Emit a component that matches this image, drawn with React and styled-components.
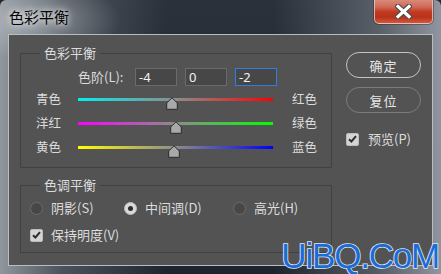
import React from "react";
import styled, { createGlobalStyle } from "styled-components";

const FONT = `"Noto Sans CJK SC", "Noto Sans", sans-serif`;

const Global = createGlobalStyle`
  html, body { margin: 0; padding: 0; background: #222831; }
  body { width: 441px; height: 274px; overflow: hidden; }
`;

const Window = styled.div`
  position: relative;
  width: 441px;
  height: 274px;
  box-sizing: border-box;
  display: flex;
  flex-direction: column;
  overflow: hidden;
  font-family: ${FONT};
  border-radius: 6px 6px 0 0;
  background:
    radial-gradient(ellipse 90px 40px at 30px 20px, rgba(200, 205, 210, 0.55), rgba(200, 205, 210, 0) 100%),
    linear-gradient(90deg, rgba(150, 156, 163, 0.95) 0%, rgba(95, 102, 111, 0.7) 14%, rgba(35, 42, 51, 0) 38%, rgba(35, 42, 51, 0) 62%, rgba(110, 116, 124, 0.7) 86%, rgba(150, 155, 165, 0.95) 100%),
    linear-gradient(180deg, #2a313b 0%, #222a33 40%, #1d242d 100%);
`;

const TitleBar = styled.div`
  height: 34px;
  flex: none;
  display: flex;
  align-items: flex-start;
  padding-left: 9px;
`;

const Title = styled.div`
  margin-top: 8px;
  font-size: 15px;
  line-height: 18px;
  color: #050505;
  text-shadow: 0 0 6px rgba(255, 255, 255, 0.85), 0 0 10px rgba(255, 255, 255, 0.5);
`;

const CloseButton = styled.div`
  margin-left: auto;
  margin-right: 8px;
  width: 59px;
  height: 24px;
  box-sizing: border-box;
  border: 1px solid rgba(235, 210, 205, 0.75);
  border-top: none;
  border-radius: 0 0 5px 5px;
  background: linear-gradient(180deg, #d98a7c 0%, #cf6a56 30%, #c2391f 52%, #b8331c 75%, #d2583c 100%);
  display: flex;
  align-items: center;
  justify-content: center;
  box-shadow: 0 0 0 1px rgba(40, 20, 20, 0.35);
`;

const Content = styled.div`
  flex: 1;
  margin: 0 8px 8px;
  box-sizing: border-box;
  background: #535353;
  border: 1px solid #b9bdc3;
  display: flex;
  align-items: flex-start;
  color: #d8d8d8;
`;

const LeftColumn = styled.div`
  width: 312px;
  padding: 11px 0 0 11px;
  display: flex;
  flex-direction: column;
`;

const Group = styled.fieldset`
  margin: ${(p) => (p.$first ? "0" : "10px 0 0")};
  padding: 0 0 ${(p) => p.$bottom}px;
  border: 1px solid #414141;
  min-width: 0;
  box-sizing: border-box;
  width: 312px;
`;

const Legend = styled.legend`
  margin-left: 19px;
  padding: 0 4px;
  font-size: 13px;
  line-height: 14px;
  height: 14px;
  color: #dcdcdc;
`;

const LevelRow = styled.div`
  margin-top: 8px;
  padding-left: 57px;
  display: flex;
  align-items: center;
  height: 18px;
`;

const LevelLabel = styled.span`
  width: 57px;
  font-size: 13px;
  line-height: 18px;
  color: #dcdcdc;
`;

const LevelInput = styled.div`
  width: 42px;
  height: 18px;
  box-sizing: border-box;
  margin-right: 8px;
  padding-left: 3px;
  background: #474747;
  border: 1px solid ${(p) => (p.$focused ? "#2f7fe0" : "#6a6a6a")};
  font-family: "Noto Sans", sans-serif;
  font-size: 13px;
  line-height: 16px;
  color: #f2f2f2;
`;

const SliderRow = styled.div`
  display: grid;
  grid-template-columns: 42px 195px 1fr;
  align-items: center;
  height: 24px;
  padding-left: 15px;
  margin-top: ${(p) => (p.$first ? "1px" : "0")};
`;

const SideLabel = styled.span`
  font-size: 12.5px;
  line-height: 16px;
  color: #dcdcdc;
  padding-left: ${(p) => (p.$right ? "19px" : "0")};
`;

const Track = styled.div`
  position: relative;
  height: 3px;
  background: linear-gradient(90deg, ${(p) => p.$from} 0%, #8c8c8c 50%, ${(p) => p.$to} 100%);
`;

const ThumbIcon = styled.svg`
  position: absolute;
  top: -1px;
  width: 12px;
  height: 13px;
  margin-left: -6px;
`;

const RadioRow = styled.div`
  margin-top: 8px;
  padding-left: 9px;
  display: grid;
  grid-template-columns: 94px 109px auto;
  height: 16px;
  align-items: center;
`;

const OptionItem = styled.label`
  display: flex;
  align-items: center;
  gap: 8px;
  font-size: 13px;
  line-height: 16px;
  color: #dcdcdc;
`;

const RadioDot = styled.span`
  width: 13px;
  height: 13px;
  box-sizing: border-box;
  border-radius: 50%;
  border: 1px solid ${(p) => (p.$checked ? "#bdbdbd" : "#6c6c6c")};
  background: ${(p) => (p.$checked ? "#d9d9d9" : "#474747")};
  display: flex;
  align-items: center;
  justify-content: center;
  &::after {
    content: "";
    display: ${(p) => (p.$checked ? "block" : "none")};
    width: 5px;
    height: 5px;
    border-radius: 50%;
    background: #2c2c2c;
  }
`;

const CheckRow = styled.div`
  margin-top: ${(p) => p.$top}px;
  padding-left: ${(p) => p.$left}px;
  display: flex;
  align-items: center;
  height: 16px;
`;

const CheckLabel = styled.label`
  display: flex;
  align-items: center;
  gap: ${(p) => p.$gap}px;
  font-size: 13px;
  line-height: 16px;
  color: #dcdcdc;
`;

const CheckBox = styled.span`
  width: 13px;
  height: 13px;
  box-sizing: border-box;
  border-radius: 2px;
  background: #d4d4d4;
  border: 1px solid #bcbcbc;
  display: flex;
  align-items: center;
  justify-content: center;
`;

const RightColumn = styled.div`
  margin-left: 14px;
  padding-top: 17px;
  display: flex;
  flex-direction: column;
`;

const PillButton = styled.div`
  width: 75px;
  height: 26px;
  box-sizing: border-box;
  margin-bottom: 9px;
  border-radius: 13px;
  border: ${(p) => (p.$primary ? "1.5px solid #c4c4c4" : "1px solid #7c7c7c")};
  display: flex;
  align-items: center;
  justify-content: center;
  font-size: 13px;
  letter-spacing: 1px;
  color: #e6e6e6;
`;

const Watermark = styled.div`
  position: absolute;
  right: 2px;
  bottom: 3px;
  font-family: "Liberation Sans", Arial, sans-serif;
  font-size: 35px;
  letter-spacing: -1.2px;
  line-height: 30px;
  color: #1a6dd6;
  -webkit-text-stroke: 1.6px #e4e8f4;
  paint-order: stroke fill;
`;

const Thumb = ({ value }) => (
  <ThumbIcon viewBox="0 0 12 13" style={{ left: `${((value + 100) / 200) * 100}%` }}>
    <path d="M6 0.8 L11.3 6 L11.3 12.3 L0.7 12.3 L0.7 6 Z" fill="#a9a9a9" stroke="#2a2a2a" strokeWidth="1" strokeLinejoin="round" />
  </ThumbIcon>
);

const CheckMark = () => (
  <svg width="9" height="8" viewBox="0 0 9 8">
    <path d="M1 4.2 L3.4 6.5 L8 1.2" fill="none" stroke="#2e2e2e" strokeWidth="2" />
  </svg>
);

const CloseGlyph = () => (
  <svg width="17" height="15" viewBox="0 0 17 15">
    <path d="M3 2.5 L14 12.5 M14 2.5 L3 12.5" stroke="#4a4a4a" strokeWidth="5.5" strokeLinecap="square" />
    <path d="M3 2.5 L14 12.5 M14 2.5 L3 12.5" stroke="#ffffff" strokeWidth="3.2" strokeLinecap="square" />
  </svg>
);

const sliders = [
  { left: "青色", right: "红色", from: "#00f0f0", to: "#ff0000", value: -4 },
  { left: "洋红", right: "绿色", from: "#ff00ff", to: "#00ff00", value: 0 },
  { left: "黄色", right: "蓝色", from: "#ffff00", to: "#0000ff", value: -2 },
];

const levels = [
  { v: "-4" },
  { v: "0" },
  { v: "-2", focused: true },
];

const tones = [
  { label: "阴影", key: "(S)", checked: false },
  { label: "中间调", key: "(D)", checked: true },
  { label: "高光", key: "(H)", checked: false },
];

export default function App() {
  return (
    <>
      <Global />
      <Window>
        <TitleBar>
          <Title>色彩平衡</Title>
          <CloseButton>
            <CloseGlyph />
          </CloseButton>
        </TitleBar>
        <Content>
          <LeftColumn>
            <Group $first $bottom={8}>
              <Legend>色彩平衡</Legend>
              <LevelRow>
                <LevelLabel>色阶(L):</LevelLabel>
                {levels.map((l, i) => (
                  <LevelInput key={i} $focused={l.focused}>
                    {l.v}
                  </LevelInput>
                ))}
              </LevelRow>
              {sliders.map((s, i) => (
                <SliderRow key={i} $first={i === 0}>
                  <SideLabel>{s.left}</SideLabel>
                  <Track $from={s.from} $to={s.to}>
                    <Thumb value={s.value} />
                  </Track>
                  <SideLabel $right>{s.right}</SideLabel>
                </SliderRow>
              ))}
            </Group>
            <Group $bottom={9}>
              <Legend>色调平衡</Legend>
              <RadioRow>
                {tones.map((t, i) => (
                  <OptionItem key={i}>
                    <RadioDot $checked={t.checked} />
                    <span>
                      {t.label}
                      {t.key}
                    </span>
                  </OptionItem>
                ))}
              </RadioRow>
              <CheckRow $top={11} $left={9}>
                <CheckLabel $gap={8}>
                  <CheckBox>
                    <CheckMark />
                  </CheckBox>
                  保持明度(V)
                </CheckLabel>
              </CheckRow>
            </Group>
          </LeftColumn>
          <RightColumn>
            <PillButton $primary>确定</PillButton>
            <PillButton>复位</PillButton>
            <CheckRow $top={9} $left={0}>
              <CheckLabel $gap={9}>
                <CheckBox>
                  <CheckMark />
                </CheckBox>
                预览(P)
              </CheckLabel>
            </CheckRow>
          </RightColumn>
        </Content>
        <Watermark>UiBQ.CoM</Watermark>
      </Window>
    </>
  );
}
